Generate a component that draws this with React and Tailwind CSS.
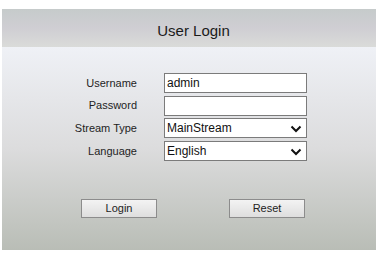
import React from 'react';

function Chevron() {
    return (
        <svg width="12" height="8" viewBox="0 0 12 8" className="absolute right-[4px] top-[6px]">
            <path d="M1.5 1.5 L6 6 L10.5 1.5" fill="none" stroke="#111" strokeWidth="2" />
        </svg>
    );
}

function Field({ children }) {
    return (
        <div className="relative h-[20px] w-[143px] bg-white border border-[#7b7b7b] text-[12px] leading-[18px] pl-[2px] text-[#111]">
            {children}
        </div>
    );
}

export default function App() {
    const rows = [
        { label: 'Username', value: 'admin' },
        { label: 'Password', value: '' },
        { label: 'Stream Type', value: 'MainStream', select: true },
        { label: 'Language', value: 'English', select: true },
    ];

    return (
        <div className="w-[380px] h-[253px] bg-white pt-[9px] pl-[2px]" style={{ fontFamily: '"Liberation Sans", Arial, sans-serif' }}>
            <div className="w-[374px] h-[241px] flex flex-col">
                {/* header */}
                <div className="h-[38px] flex items-center justify-center bg-gradient-to-b from-[#c6cbcb] via-[#cfced3] to-[#dadbd9] text-[15px] text-[#1a1a1a] pt-[6px] pl-[9px]">
                    User Login
                </div>

                {/* body */}
                <div className="flex-1 bg-gradient-to-b from-[#eff1f6] via-[#dcdcdd] to-[#b9bdb6] pt-[26px]">
                    <div className="grid grid-cols-[135px_143px] gap-x-[27px] gap-y-[2.7px] items-center">
                        {rows.map((r) => (
                            <React.Fragment key={r.label}>
                                <div className="text-right text-[11px] text-[#1e1e1e]">{r.label}</div>
                                <Field>
                                    {r.value}
                                    {r.select && <Chevron />}
                                </Field>
                            </React.Fragment>
                        ))}
                    </div>

                    <div className="flex mt-[38px] pl-[79px] gap-[72px]">
                        <button className="w-[76px] h-[19px] border border-[#8c8c8c] bg-gradient-to-b from-[#f3f3f3] to-[#dedede] text-[11px] text-[#222] leading-[17px]">
                            Login
                        </button>
                        <button className="w-[76px] h-[19px] border border-[#8c8c8c] bg-gradient-to-b from-[#f3f3f3] to-[#dedede] text-[11px] text-[#222] leading-[17px]">
                            Reset
                        </button>
                    </div>
                </div>
            </div>
        </div>
    );
}
